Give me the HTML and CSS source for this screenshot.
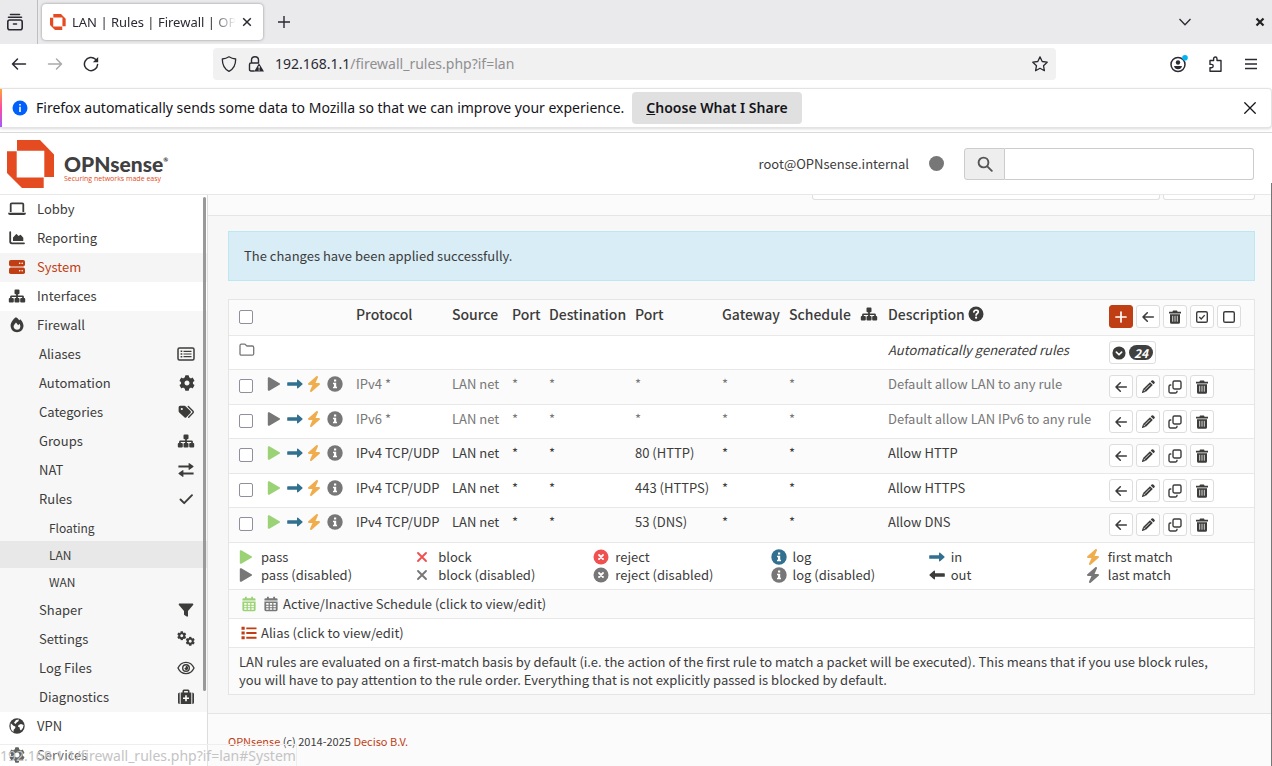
FILE: index.html
```html
<!DOCTYPE html>
<html lang="en">
<head>
<meta charset="utf-8">
<title>LAN | Rules | Firewall | OPNsense</title>
<link rel="stylesheet" href="styles.css">
</head>
<body>
<svg class="sprite" aria-hidden="true">
  <symbol id="i-play" viewBox="0 0 16 16"><path d="M.8 2.200c0-.9.8-1.300 1.500-.9l10.200 5.900c.7.400.7 1.200 0 1.600L2.300 14.700c-.7.400-1.500 0-1.500-.9z"/></symbol>
  <symbol id="i-right" viewBox="0 0 16 16"><path d="M.8 6.200H10V4.300c0-.6.7-.9 1.100-.5l4.300 3.700c.3.300.3.700 0 1l-4.300 3.700c-.4.4-1.100.1-1.100-.5V9.800H.8a.6.6 0 0 1-.6-.6V6.800c0-.3.300-.6.600-.6z"/></symbol>
  <symbol id="i-leftlong" viewBox="0 0 16 16"><path d="M15.200 6.200H6V4.300c0-.6-.7-.9-1.100-.5L.6 7.500c-.3.300-.3.700 0 1l4.300 3.700c.4.400 1.100.1 1.100-.5V9.800h9.200c.3 0 .6-.3.600-.6V6.800c0-.3-.3-.6-.6-.6z"/></symbol>
  <symbol id="i-bolt" viewBox="0 0 512 512"><path d="M349.400 44.600c5.900-13.700 1.500-29.700-10.600-38.500s-28.600-8-39.900 1.800l-256 224c-10 8.800-13.600 22.900-8.900 35.300S50.700 288 64 288H175.500L98.600 467.400c-5.900 13.700-1.500 29.700 10.600 38.500s28.600 8 39.900-1.800l256-224c10-8.800 13.600-22.900 8.900-35.300s-16.600-20.700-30-20.700H272.500L349.400 44.600z"/></symbol>
  <symbol id="i-info" viewBox="0 0 16 16"><circle cx="8" cy="8" r="7.700"/><path fill="#fff" d="M7 3.500h2.200v2H7zM6 6.700h3.200v4H10v1.500H6v-1.500h1V8.200H6z"/></symbol>
  <symbol id="i-help" viewBox="0 0 16 16"><circle cx="8" cy="8" r="7.500"/><path fill="none" stroke="#fff" stroke-width="1.700" stroke-linecap="round" d="M5.800 6c.2-1.200 1-1.800 2.200-1.800s2.300.7 2.300 1.900c0 1.400-2.200 1.500-2.200 3"/><circle cx="8.100" cy="11.700" r="1.100" fill="#fff"/></symbol>
  <symbol id="i-sitemap" viewBox="0 0 18 16"><path d="M6.500 2.500q0-1 1-1h3q1 0 1 1v2.700q0 1-1 1h-.6v1.200h4.600q1.400 0 1.400 1.400v1.200h.3q1 0 1 1v2.500q0 1-1 1h-3q-1 0-1-1V11q0-1 1-1h1V8.900H9.900V10h.6q1 0 1 1v2.500q0 1-1 1h-3q-1 0-1-1V11q0-1 1-1h.6V8.900H3.800V10h1q1 0 1 1v2.500q0 1-1 1h-3q-1 0-1-1V11q0-1 1-1h.3V8.800q0-1.400 1.400-1.400h4.600V6.200h-.6q-1 0-1-1z"/></symbol>
  <symbol id="i-gear" viewBox="0 0 512 512"><path d="M487.400 315.700l-42.600-24.600c4.300-23.200 4.300-47 0-70.200l42.600-24.600c4.900-2.800 7.100-8.600 5.500-14-11.100-35.600-30-67.800-54.700-94.600-3.800-4.100-10-5.100-14.800-2.300L380.800 110c-17.900-15.400-38.500-27.300-60.800-35.100V25.800c0-5.600-3.900-10.500-9.400-11.700-36.700-8.200-74.300-7.800-109.200 0-5.500 1.200-9.400 6.100-9.400 11.700V75c-22.200 7.900-42.800 19.800-60.800 35.100L88.700 85.500c-4.900-2.800-11-1.900-14.800 2.300-24.700 26.700-43.600 58.900-54.700 94.600-1.700 5.400.6 11.200 5.500 14L67.300 221c-4.300 23.200-4.300 47 0 70.200l-42.600 24.600c-4.900 2.800-7.100 8.600-5.500 14 11.100 35.600 30 67.800 54.700 94.600 3.800 4.100 10 5.100 14.800 2.300l42.600-24.600c17.900 15.400 38.500 27.300 60.800 35.100v49.200c0 5.600 3.900 10.500 9.400 11.700 36.700 8.200 74.300 7.800 109.200 0 5.500-1.200 9.400-6.100 9.400-11.700v-49.200c22.200-7.900 42.800-19.800 60.800-35.100l42.600 24.600c4.900 2.800 11 1.900 14.800-2.300 24.700-26.700 43.600-58.900 54.700-94.600 1.500-5.500-.7-11.300-5.600-14.100zM256 336c-44.100 0-80-35.900-80-80s35.900-80 80-80 80 35.900 80 80-35.900 80-80 80z"/></symbol>
  <symbol id="i-left" viewBox="0 0 16 16"><path fill="none" stroke="currentColor" stroke-width="1.600" stroke-linecap="round" stroke-linejoin="round" d="M13.300 8H3M7.300 3.800L3 8l4.300 4.200"/></symbol>
  <symbol id="i-pencil" viewBox="0 0 16 16"><path d="M10 3.200l2.800 2.800-6.800 6.800-3.700 1.100q-.5.100-.4-.4l1.200-3.600zM10.700 2.500l1-1q.8-.7 1.600 0l1.200 1.200q.8.800 0 1.600l-1 1z"/><path stroke="#fff" stroke-width=".8" d="M5 10.700l5-5M3.600 10.800l1.600 1.600"/></symbol>
  <symbol id="i-clone" viewBox="0 0 16 16"><g fill="none" stroke="currentColor" stroke-width="1.400"><rect x="6" y="2" width="8" height="8" rx="1.400"/><path d="M4.300 6H3.400Q2 6 2 7.400v5.200Q2 14 3.400 14h5.200q1.400 0 1.400-1.400v-.9"/></g></symbol>
  <symbol id="i-trash" viewBox="0 0 16 16"><path d="M3 5.300h10v7.900q0 1.500-1.500 1.500h-7Q3 14.700 3 13.200zM2 2.800h3.400L6 1.500h4l.6 1.300H14v1.600H2z"/><path stroke="#fff" stroke-width=".8" d="M5.700 6.800v5.900M8 6.800v5.900M10.300 6.800v5.900"/></symbol>
  <symbol id="i-checked" viewBox="0 0 16 16"><g fill="none" stroke="currentColor" stroke-width="1.400"><rect x="2.700" y="2.700" width="10.600" height="10.600" rx="1.400"/><path d="M5.300 8.100l1.900 1.900 3.500-3.900"/></g></symbol>
  <symbol id="i-square" viewBox="0 0 16 16"><rect x="2.700" y="2.700" width="10.600" height="10.600" rx="1.400" fill="none" stroke="currentColor" stroke-width="1.400"/></symbol>
  <symbol id="i-plus" viewBox="0 0 16 16"><path fill="none" stroke="currentColor" stroke-width="1.700" stroke-linecap="round" d="M8 3v10M3 8h10"/></symbol>
  <symbol id="i-x" viewBox="0 0 16 16"><path fill="none" stroke="currentColor" stroke-width="1.900" stroke-linecap="round" d="M2 4l8 8M10 4l-8 8"/></symbol>
  <symbol id="i-xcircle" viewBox="0 0 16 16"><circle cx="8" cy="8" r="7.500"/><path stroke="#fff" stroke-width="1.800" stroke-linecap="round" d="M6 6l4 4M10 6l-4 4"/></symbol>
  <symbol id="i-calendar" viewBox="0 0 16 16"><path d="M4 .8h1.800v1.400h4.400V.8H12v1.400h1.200q1.400 0 1.400 1.400v1H1.400v-1q0-1.400 1.400-1.400H4zM1.400 5.500h13.200v8.300q0 1.400-1.400 1.400H2.800q-1.400 0-1.400-1.400z"/><path fill="#fff" d="M3.200 7h2.400v1.700H3.200zM6.800 7h2.400v1.700H6.800zM10.400 7h2.400v1.700h-2.400zM3.200 9.700h2.400v1.600H3.200zM6.800 9.700h2.400v1.600H6.800zM10.400 9.700h2.400v1.600h-2.400zM3.200 12.200h2.400v1.500H3.200zM6.800 12.200h2.400v1.500H6.800zM10.400 12.200h2.400v1.500h-2.400z"/></symbol>
  <symbol id="i-list" viewBox="0 0 16 16"><path d="M.5 1.800h3.200v3H.5zM.5 6.500h3.200v3H.5zM.5 11.200h3.200v3H.5zM5.300 2.400h10.200v1.900H5.300zM5.300 7.100h10.200V9H5.300zM5.300 11.800h10.200v1.900H5.300z"/></symbol>
  <symbol id="i-folder" viewBox="0 0 16 16"><path fill="none" stroke="currentColor" stroke-width="1.300" d="M2.300 2.200h3.300q.6 0 1 .5l.7.800q.4.500 1 .5h4.900q1.500 0 1.500 1.500v6.200q0 1.500-1.500 1.500H2.500Q1 13.200 1 11.700V3.700q0-1.500 1.300-1.500z"/></symbol>
  <symbol id="i-chevcircle" viewBox="0 0 16 16"><circle cx="8" cy="8" r="7.500"/><path fill="none" stroke="#fff" stroke-width="1.900" stroke-linecap="round" stroke-linejoin="round" d="M5 7l3 3 3-3"/></symbol>
  <symbol id="i-laptop" viewBox="0 0 18 16"><path fill="none" stroke="currentColor" stroke-width="1.800" d="M2.700 11V3.300q0-1 1-1h10.600q1 0 1 1V11"/><path d="M0 11.800h18q0 2.200-2 2.200H2q-2 0-2-2.200z"/></symbol>
  <symbol id="i-chart" viewBox="0 0 16 16"><path fill="none" stroke="currentColor" stroke-width="1.800" stroke-linecap="round" d="M1.200 2.200v9.400q0 1.700 1.700 1.700h12.100"/><path d="M4 11V7.500l3-3.300q.4-.4.800 0L9.500 6l1.600-1q.4-.3.800.1L14.300 7.800V11z"/></symbol>
  <symbol id="i-server" viewBox="0 0 16 16"><rect y="1" width="16" height="6.400" rx="1.800"/><rect y="8.600" width="16" height="6.400" rx="1.800"/><g fill="#fff"><circle cx="10.700" cy="4.200" r=".8"/><circle cx="13.200" cy="4.200" r=".8"/><circle cx="10.700" cy="11.800" r=".8"/><circle cx="13.200" cy="11.800" r=".8"/></g></symbol>
  <symbol id="i-fire" viewBox="0 0 16 16"><path fill-rule="evenodd" d="M6 .8C4.200 2.500 1.600 5.600 1.600 8.800 1.600 12.600 4.500 15.200 8 15.200s6.500-2.600 6.500-6.400c0-2.500-1.800-5.300-3.200-6.600l-1 1.100C9.800 2.600 8.700 1.500 7.900.8 7.200.4 6.600.3 6 .8zM8.100 12.700c-2 0-3.500-1.200-3.500-3.100 0-1.200.9-2.300 2.400-4.200l2.200 2.800 1.300-1.500c1.600 2.300 1 6-2.400 6z"/></symbol>
  <symbol id="i-card" viewBox="0 0 18 16"><rect x="1" y="2" width="16" height="12" rx="1.500" fill="none" stroke="currentColor" stroke-width="1.500"/><path d="M3.600 4.500h1.700v1.600H3.600zM3.600 7.200h1.700v1.600H3.600zM3.600 9.900h1.700v1.600H3.600zM6.500 4.700h8v1.200h-8zM6.500 7.400h8v1.200h-8zM6.500 10.100h8v1.200h-8z"/></symbol>
  <symbol id="i-tags" viewBox="0 0 16 16"><path fill-rule="evenodd" d="M.6 3.300q0-1.500 1.500-1.500h4.300q.8 0 1.400.6l4.700 4.700q1 1 0 2L8.400 13.300q-1 1-2 0L1.200 8.500q-.6-.6-.6-1.400zM3.800 3.900a1.100 1.100 0 1 0 0 2.200 1.100 1.100 0 0 0 0-2.200z"/><path fill="none" stroke="currentColor" stroke-width="1.400" stroke-linecap="round" d="M10.300 2.400l4.500 4.700q1 1 0 2l-4.100 4.200"/></symbol>
  <symbol id="i-swap" viewBox="0 0 16 16"><path d="M.4 3.500h10.200V1.700q0-1 .8-.4l3.900 2.700q.6.500 0 1l-3.900 2.700q-.8.600-.8-.4V5.500H.4zM15.600 10.500H5.400V8.700q0-1-.8-.4L.7 11q-.6.500 0 1l3.900 2.700q.8.600.8-.4v-1.800h10.200z"/></symbol>
  <symbol id="i-check" viewBox="0 0 16 16"><path fill="none" stroke="currentColor" stroke-width="1.900" stroke-linecap="round" stroke-linejoin="round" d="M2.500 8.500l3.700 3.700 7.800-8"/></symbol>
  <symbol id="i-filter" viewBox="0 0 16 16"><path d="M1.200 1.500h13.600q1 .6.300 1.500L10 9v5q-.4 1-1.300.5L6.400 13Q6 12.700 6 12.200V9L.9 3Q.2 2.100 1.200 1.500z"/></symbol>
  <symbol id="i-eye" viewBox="0 0 18 16"><g fill="none" stroke="currentColor" stroke-width="1.400"><path d="M1 8c1.700-3.700 4.600-5.600 8-5.600S15.300 4.300 17 8c-1.700 3.700-4.600 5.600-8 5.600S2.700 11.700 1 8z"/><circle cx="9" cy="8" r="3.300"/></g><path d="M9 5.800a2.200 2.200 0 0 1 0 4.400L7 8.500q1.700.3 2-2.700z"/></symbol>
  <symbol id="i-medkit" viewBox="0 0 16 16"><path fill-rule="evenodd" d="M0 5q0-1.600 1.700-1.600V15Q0 15 0 13.500zM16 5q0-1.600-1.700-1.600V15q1.700 0 1.700-1.500zM2.700 3.400h1.800V2q0-1.500 1.400-1.500h4.200q1.400 0 1.400 1.500v1.400h1.800V15H2.700zM6.100 2v1.400h3.800V2z"/><path fill="#fff" d="M7.200 6.200h1.600v2.200H11V10H8.800v2.200H7.200V10H5V8.400h2.200z"/></symbol>
  <symbol id="i-globe" viewBox="0 0 16 16"><circle cx="8" cy="8" r="7.700"/><path fill="#fff" d="M1.800 5.200L4.500 7.700l1.800.8v1.600l-1.600 1.600-.3 2.200Q.8 11.500 1.800 5.200zM7 2l3-.4-.6 1.600L7.700 4.400 6.500 6 5 4.700zM9.500 7l2.500-.9 2.600.9q-.2 4-2.700 5.600L11 11.500l-.5-2.200L9 8.700z"/></symbol>
  <symbol id="i-search" viewBox="0 0 16 16"><g fill="none" stroke="currentColor" stroke-width="1.900" stroke-linecap="round"><circle cx="6.500" cy="6.500" r="4.900"/><path d="M10.300 10.300l4.500 4.500"/></g></symbol>
  <symbol id="i-close" viewBox="0 0 16 16"><path fill="none" stroke="currentColor" stroke-width="1.500" stroke-linecap="round" d="M2 2l12 12M14 2L2 14"/></symbol>
  <symbol id="i-mark" viewBox="0 0 48 48"><path d="M10 0h23l14 14.500V37H37.300V10.700H10z"/><path d="M0 11.200h9.700v26.200h27V48H15L0 33z"/></symbol>
</svg>

<div class="window">
  <div class="tabstrip">
    <button class="tool recent" aria-label="Recent browsing"><svg class="i18" viewBox="0 0 18 18"><g fill="none" stroke="currentColor" stroke-width="1.600" stroke-linecap="round"><path d="M4.500 1.500h9M2.500 4.300h13M7.500 11h3"/><rect x="1.800" y="7" width="14.400" height="9.800" rx="2"/></g></svg></button>
    <div class="tab"><svg class="i16 brand"><use href="#i-mark"/></svg><span class="tab-title">LAN | Rules | Firewall | OPNsense</span><button class="tool" aria-label="Close tab"><svg class="i10" viewBox="0 0 10 10"><path stroke="currentColor" stroke-width="1.500" d="M1.200 1.200l7.600 7.600M8.800 1.200L1.200 8.800"/></svg></button></div>
    <button class="tool newtab" aria-label="New tab"><svg class="i16" viewBox="0 0 16 16"><path fill="none" stroke="currentColor" stroke-width="1.400" d="M8 2v12M2 8h12"/></svg></button>
    <button class="tool listtabs" aria-label="List all tabs"><svg class="i14" viewBox="0 0 14 14"><path fill="none" stroke="currentColor" stroke-width="1.300" d="M1.500 4L7 9.700 12.500 4"/></svg></button>
    <button class="tool winclose" aria-label="Close window"><svg class="i10" viewBox="0 0 10 10"><path stroke="currentColor" stroke-width="2.200" d="M1.500 1.500l7 7M8.500 1.500l-7 7"/></svg></button>
  </div>
  <div class="toolbar">
    <button class="tool" aria-label="Back"><svg class="i16" viewBox="0 0 16 16"><path fill="none" stroke="currentColor" stroke-width="1.500" stroke-linecap="round" stroke-linejoin="round" d="M14.500 8h-13M6.500 3L1.500 8l5 5"/></svg></button>
    <button class="tool faint" aria-label="Forward"><svg class="i16" viewBox="0 0 16 16"><path fill="none" stroke="currentColor" stroke-width="1.500" stroke-linecap="round" stroke-linejoin="round" d="M1.500 8h13M9.500 3l5 5-5 5"/></svg></button>
    <button class="tool" aria-label="Reload"><svg class="i16" viewBox="0 0 16 16"><path fill="none" stroke="currentColor" stroke-width="1.500" stroke-linecap="round" d="M14.600 8.500A6.600 6.600 0 1 1 12.500 3.200"/><path d="M15.200.9v5.400H9.800z"/></svg></button>
    <div class="urlbar">
      <svg class="i16" viewBox="0 0 16 16"><path fill="none" stroke="currentColor" stroke-width="1.300" stroke-linejoin="round" d="M8 .8c2 1.300 4.300 2 6.700 2.200 0 5.600-1.900 10-6.700 12.300C3.200 13 1.300 8.600 1.300 3 3.700 2.800 6 2.100 8 .8z"/></svg>
      <svg class="i16" viewBox="0 0 16 16"><g fill="none" stroke="currentColor" stroke-width="1.400"><path d="M3.500 7V4q0-3.200 3.500-3.200T10.500 4v3M6.500 15H3q-1.500 0-1.500-1.500v-5Q1.500 7 3 7h8"/></g><path d="M11 7.300l5 8.200H6.200z"/><path stroke="#fff" stroke-width="1.200" d="M11.100 10v2.600M11.100 13.400v1.100"/></svg>
      <span class="url">192.168.1.1<span>/firewall_rules.php?if=lan</span></span>
      <svg class="i16" viewBox="0 0 16 16"><path fill="none" stroke="currentColor" stroke-width="1.300" stroke-linejoin="round" d="M8 .9l2.200 4.600 5 .7-3.700 3.500.9 5L8 12.300l-4.400 2.400.9-5L.8 6.200l5-.7z"/></svg>
    </div>
    <div class="tools">
      <button class="tool" aria-label="Account"><svg class="i18" viewBox="0 0 18 18"><circle cx="8" cy="9.500" r="7" fill="none" stroke="currentColor" stroke-width="1.500"/><circle cx="8" cy="7.500" r="2.200"/><path d="M4 11h8q-.8 3.200-4 3.200T4 11z"/><circle cx="15" cy="2.800" r="2.800" fill="#00b3f4"/></svg></button>
      <button class="tool" aria-label="Extensions"><svg class="i16" viewBox="0 0 16 16"><path fill="none" stroke="currentColor" stroke-width="1.400" stroke-linejoin="round" d="M2 4.500h3.600V2.700a1.700 1.700 0 0 1 3.400 0v1.800h4v10.800H2v-3.500h1.500a1.700 1.700 0 0 0 0-3.400H2z"/></svg></button>
      <button class="tool" aria-label="Menu"><svg class="i14" viewBox="0 0 14 14"><path stroke="currentColor" stroke-width="1.400" d="M1 2.500h12M1 7h12M1 11.500h12"/></svg></button>
    </div>
  </div>
  <div class="notice">
    <svg class="i16" viewBox="0 0 16 16"><circle cx="8" cy="8" r="7.500" fill="#0060fe"/><path fill="#fff" d="M7.200 4h1.600v1.500H7.200zM7.200 6.700h1.600V12H7.200z"/></svg>
    <span>Firefox automatically sends some data to Mozilla so that we can improve your experience.</span>
    <button class="choose"><u>C</u>hoose What I Share</button>
    <button class="tool dismiss" aria-label="Close"><svg class="i14"><use href="#i-close"/></svg></button>
  </div>

  <div class="page">
    <header class="topbar">
      <a class="logo" href="#">
        <svg class="logo-mark brand"><use href="#i-mark"/></svg>
        <span class="logo-text"><b>OPNsense<sup>®</sup></b><small>Securing networks made easy</small></span>
      </a>
      <span class="user">root@OPNsense.internal</span>
      <span class="status-dot"></span>
      <form class="search"><label for="q" aria-label="Search"><svg class="i16"><use href="#i-search"/></svg></label><input id="q" type="text"></form>
    </header>
    <div class="columns">
      <nav class="sidebar">
        <a href="#"><svg class="ico"><use href="#i-laptop"/></svg>Lobby</a>
        <a href="#"><svg class="ico"><use href="#i-chart"/></svg>Reporting</a>
        <a href="#" class="hover"><svg class="ico"><use href="#i-server"/></svg>System</a>
        <a href="#"><svg class="ico"><use href="#i-sitemap"/></svg>Interfaces</a>
        <div class="open">
          <a href="#"><svg class="ico"><use href="#i-fire"/></svg>Firewall</a>
          <a href="#" class="sub">Aliases<svg class="ico"><use href="#i-card"/></svg></a>
          <a href="#" class="sub">Automation<svg class="i16"><use href="#i-gear"/></svg></a>
          <a href="#" class="sub">Categories<svg class="ico"><use href="#i-tags"/></svg></a>
          <a href="#" class="sub">Groups<svg class="ico"><use href="#i-sitemap"/></svg></a>
          <a href="#" class="sub">NAT<svg class="ico"><use href="#i-swap"/></svg></a>
          <a href="#" class="sub">Rules<svg class="ico"><use href="#i-check"/></svg></a>
          <div class="leafs">
            <a href="#">Floating</a>
            <a href="#" class="current">LAN</a>
            <a href="#">WAN</a>
          </div>
          <a href="#" class="sub">Shaper<svg class="ico"><use href="#i-filter"/></svg></a>
          <a href="#" class="sub">Settings<svg class="ico" viewBox="0 0 18 16"><use href="#i-gear" x="0" y="0" width="9.500" height="9.500"/><use href="#i-gear" x="8.500" y="5.500" width="9.500" height="9.500"/></svg></a>
          <a href="#" class="sub">Log Files<svg class="ico"><use href="#i-eye"/></svg></a>
          <a href="#" class="sub">Diagnostics<svg class="ico"><use href="#i-medkit"/></svg></a>
        </div>
        <a href="#"><svg class="ico"><use href="#i-globe"/></svg>VPN</a>
        <a href="#"><svg class="ico"><use href="#i-gear"/></svg>Services</a>
        <span class="nav-scroll"></span>
      </nav>

      <main>
        <div class="pagehead"><span class="head-select"></span><span class="head-button"></span></div>
        <div class="content">
          <div class="alert" role="alert">The changes have been applied successfully.</div>
          <table class="rules">
            <colgroup><col class="c-check"><col class="c-icons"><col class="c-proto"><col class="c-source"><col class="c-sport"><col class="c-dest"><col class="c-dport"><col class="c-gate"><col class="c-sched"><col class="c-site"><col class="c-desc"><col class="c-act"></colgroup>
            <thead>
              <tr><th><input type="checkbox" aria-label="Select all"></th><th></th><th>Protocol</th><th>Source</th><th>Port</th><th>Destination</th><th>Port</th><th>Gateway</th><th>Schedule</th><th><svg class="ico"><use href="#i-sitemap"/></svg></th><th>Description <svg class="i16"><use href="#i-help"/></svg></th>
              <th><div class="actions"><button class="btn primary" aria-label="Add"><svg class="i16"><use href="#i-plus"/></svg></button><button class="btn" aria-label="Move"><svg class="i16"><use href="#i-left"/></svg></button><button class="btn" aria-label="Delete"><svg class="i16"><use href="#i-trash"/></svg></button><button class="btn" aria-label="Enable"><svg class="i16"><use href="#i-checked"/></svg></button><button class="btn" aria-label="Disable"><svg class="i16"><use href="#i-square"/></svg></button></div></th></tr>
            </thead>
            <tbody>
              <tr><td><div class="icons grey"><svg class="i16"><use href="#i-folder"/></svg></div></td><td></td><td></td><td></td><td></td><td></td><td></td><td></td><td></td><td></td><td><i>Automatically generated rules</i></td>
              <td><button class="btn wide"><svg class="i14"><use href="#i-chevcircle"/></svg><span class="badge">24</span></button></td></tr>

              <tr class="off"><td><input type="checkbox" aria-label="Select rule 1"></td><td><div class="icons"><svg class="i16 grey"><use href="#i-play"/></svg><svg class="i16 blue"><use href="#i-right"/></svg><svg class="i16 amber"><use href="#i-bolt"/></svg><svg class="i16 grey"><use href="#i-info"/></svg></div></td><td>IPv4 *</td><td>LAN net</td><td>*</td><td>*</td><td>*</td><td>*</td><td>*</td><td></td><td>Default allow LAN to any rule</td>
              <td><div class="actions"><button class="btn" aria-label="Move"><svg class="i16"><use href="#i-left"/></svg></button><button class="btn" aria-label="Edit"><svg class="i16"><use href="#i-pencil"/></svg></button><button class="btn" aria-label="Clone"><svg class="i16"><use href="#i-clone"/></svg></button><button class="btn" aria-label="Delete"><svg class="i16"><use href="#i-trash"/></svg></button></div></td></tr>

              <tr class="off"><td><input type="checkbox" aria-label="Select rule 2"></td><td><div class="icons"><svg class="i16 grey"><use href="#i-play"/></svg><svg class="i16 blue"><use href="#i-right"/></svg><svg class="i16 amber"><use href="#i-bolt"/></svg><svg class="i16 grey"><use href="#i-info"/></svg></div></td><td>IPv6 *</td><td>LAN net</td><td>*</td><td>*</td><td>*</td><td>*</td><td>*</td><td></td><td>Default allow LAN IPv6 to any rule</td>
              <td><div class="actions"><button class="btn" aria-label="Move"><svg class="i16"><use href="#i-left"/></svg></button><button class="btn" aria-label="Edit"><svg class="i16"><use href="#i-pencil"/></svg></button><button class="btn" aria-label="Clone"><svg class="i16"><use href="#i-clone"/></svg></button><button class="btn" aria-label="Delete"><svg class="i16"><use href="#i-trash"/></svg></button></div></td></tr>

              <tr><td><input type="checkbox" aria-label="Select rule 3"></td><td><div class="icons"><svg class="i16 green"><use href="#i-play"/></svg><svg class="i16 blue"><use href="#i-right"/></svg><svg class="i16 amber"><use href="#i-bolt"/></svg><svg class="i16 grey"><use href="#i-info"/></svg></div></td><td>IPv4 TCP/UDP</td><td>LAN net</td><td>*</td><td>*</td><td>80 (HTTP)</td><td>*</td><td>*</td><td></td><td>Allow HTTP</td>
              <td><div class="actions"><button class="btn" aria-label="Move"><svg class="i16"><use href="#i-left"/></svg></button><button class="btn" aria-label="Edit"><svg class="i16"><use href="#i-pencil"/></svg></button><button class="btn" aria-label="Clone"><svg class="i16"><use href="#i-clone"/></svg></button><button class="btn" aria-label="Delete"><svg class="i16"><use href="#i-trash"/></svg></button></div></td></tr>

              <tr><td><input type="checkbox" aria-label="Select rule 4"></td><td><div class="icons"><svg class="i16 green"><use href="#i-play"/></svg><svg class="i16 blue"><use href="#i-right"/></svg><svg class="i16 amber"><use href="#i-bolt"/></svg><svg class="i16 grey"><use href="#i-info"/></svg></div></td><td>IPv4 TCP/UDP</td><td>LAN net</td><td>*</td><td>*</td><td>443 (HTTPS)</td><td>*</td><td>*</td><td></td><td>Allow HTTPS</td>
              <td><div class="actions"><button class="btn" aria-label="Move"><svg class="i16"><use href="#i-left"/></svg></button><button class="btn" aria-label="Edit"><svg class="i16"><use href="#i-pencil"/></svg></button><button class="btn" aria-label="Clone"><svg class="i16"><use href="#i-clone"/></svg></button><button class="btn" aria-label="Delete"><svg class="i16"><use href="#i-trash"/></svg></button></div></td></tr>

              <tr><td><input type="checkbox" aria-label="Select rule 5"></td><td><div class="icons"><svg class="i16 green"><use href="#i-play"/></svg><svg class="i16 blue"><use href="#i-right"/></svg><svg class="i16 amber"><use href="#i-bolt"/></svg><svg class="i16 grey"><use href="#i-info"/></svg></div></td><td>IPv4 TCP/UDP</td><td>LAN net</td><td>*</td><td>*</td><td>53 (DNS)</td><td>*</td><td>*</td><td></td><td>Allow DNS</td>
              <td><div class="actions"><button class="btn" aria-label="Move"><svg class="i16"><use href="#i-left"/></svg></button><button class="btn" aria-label="Edit"><svg class="i16"><use href="#i-pencil"/></svg></button><button class="btn" aria-label="Clone"><svg class="i16"><use href="#i-clone"/></svg></button><button class="btn" aria-label="Delete"><svg class="i16"><use href="#i-trash"/></svg></button></div></td></tr>
            </tbody>
            <tfoot>
              <tr><td colspan="12"><div class="legend">
                <span><svg class="i16 green"><use href="#i-play"/></svg>pass</span><span><svg class="i16 red"><use href="#i-x"/></svg>block</span><span><svg class="i16 red"><use href="#i-xcircle"/></svg>reject</span><span><svg class="i16 blue"><use href="#i-info"/></svg>log</span><span><svg class="i16 blue"><use href="#i-right"/></svg>in</span><span><svg class="i16 amber"><use href="#i-bolt"/></svg>first match</span>
                <span><svg class="i16 grey"><use href="#i-play"/></svg>pass (disabled)</span><span><svg class="i16 grey"><use href="#i-x"/></svg>block (disabled)</span><span><svg class="i16 grey"><use href="#i-xcircle"/></svg>reject (disabled)</span><span><svg class="i16 grey"><use href="#i-info"/></svg>log (disabled)</span><span><svg class="i16"><use href="#i-leftlong"/></svg>out</span><span><svg class="i16 grey"><use href="#i-bolt"/></svg>last match</span>
              </div></td></tr>
              <tr><td colspan="12"><div class="note"><svg class="i16 green"><use href="#i-calendar"/></svg><svg class="i16 grey cal"><use href="#i-calendar"/></svg>Active/Inactive Schedule (click to view/edit)</div></td></tr>
              <tr><td colspan="12"><div class="note"><svg class="i16 rust"><use href="#i-list"/></svg>Alias (click to view/edit)</div></td></tr>
              <tr><td colspan="12" class="about">LAN rules are evaluated on a first-match basis by default (i.e. the action of the first rule to match a packet will be executed). This means that if you use block rules, you will have to pay attention to the rule order. Everything that is not explicitly passed is blocked by default.</td></tr>
            </tfoot>
          </table>
        </div>
        <footer><a href="#">OPNsense</a> (c) 2014-2025 <a href="#">Deciso B.V.</a></footer>
      </main>
    </div>
    <div class="linkstatus">192.168.1.1/firewall_rules.php?if=lan#System</div>
    <span class="page-scroll"></span>
  </div>
</div>
</body>
</html>
```
FILE: styles.css
```css
* { box-sizing: border-box; }
body { margin: 0; overflow: hidden; color: #3c3c3b; font: 13px/18px "Noto Sans CJK JP", sans-serif; }
a { color: inherit; text-decoration: none; }
button { font: inherit; color: inherit; }
svg { display: block; fill: currentColor; flex: none; }
.sprite { display: none; }
.i10 { width: 10px; height: 10px; }
.i14 { width: 14px; height: 14px; }
.i16 { width: 16px; height: 16px; }
.i18 { width: 18px; height: 18px; }
.ico { width: 18px; height: 16px; }
.brand { color: #e44b20; }
.grey { color: #777; }
.blue { color: #31708f; }
.green { color: #9bd275; }
.amber { color: #f0ad4e; }
.red { color: #f05050; }
.rust { color: #c03e14; }

.window { display: flex; flex-direction: column; height: 100vh; }
.tool { display: flex; padding: 0; border: 0; background: none; }

/* browser chrome */
.tabstrip, .toolbar, .notice { display: flex; flex: none; align-items: center; color: #2b2a33; font-family: "Noto Sans", sans-serif; font-size: 14px; line-height: 20px; }
.tabstrip { height: 44px; padding-right: 7px; background: #eaeaec; }
.recent { align-items: center; height: 44px; padding: 0 13px 0 6px; border-right: 1px solid #bdbdc2; }
.tab { display: flex; align-items: center; width: 221px; height: 36px; margin-left: 4px; padding: 0 11px 0 8px; gap: 6px; border-radius: 4px; background: #fff; box-shadow: 0 0 3px rgba(0, 0, 0, .4); }
.tab-title { flex: 1; overflow: hidden; font-size: 13px; white-space: nowrap; -webkit-mask-image: linear-gradient(to right, #000 85%, transparent); mask-image: linear-gradient(to right, #000 85%, transparent); }
.newtab { margin-left: 13px; }
.listtabs { margin-left: auto; }
.winclose { margin-left: 63px; color: #222; }
.toolbar { height: 44px; padding: 0 14px 4px 11px; gap: 20px; background: #fff; }
.faint { color: #aaa; }
.urlbar { display: flex; flex: 1; align-items: center; height: 32px; margin: 0 102px 0 94px; padding: 0 8px; gap: 11px; border-radius: 4px; background: #f1f1f1; }
.url { flex: 1; }
.url span { color: #8f8f91; }
.tools { display: flex; align-items: center; gap: 20px; margin-left: -8px; }
.notice { height: 40px; margin-bottom: 4px; padding: 0 14px 0 12px; gap: 8px; border: 1px solid #e3e3e3; border-left: 0; border-radius: 0 4px 4px 0; background: linear-gradient(#ffa436, #ff4aa2, #a259ff) left / 2px 100% no-repeat, #fff; box-shadow: 0 1px 3px rgba(0, 0, 0, .15); color: #15141a; }
.choose { height: 32px; padding: 0 14px; border: 0; border-radius: 4px; background: #e0e0e0; font-weight: 600; }
.dismiss { margin-left: auto; }

/* application header */
.page { position: relative; display: flex; flex: 1; flex-direction: column; min-height: 0; border-top: 1px solid #d9d9d9; background: #fff; }
.topbar { display: flex; flex: none; align-items: center; height: 62px; padding: 0 18px 0 7px; gap: 20px; border-bottom: 1px solid #e8e8e8; }
.logo { display: flex; gap: 9px; align-items: center; margin-right: auto; }
.logo-mark { width: 48px; height: 48px; }
.logo-text { display: flex; flex-direction: column; padding-top: 10px; }
.logo-text b { color: #404041; font: 900 21px/20px "Lato", sans-serif; }
.logo-text sup { font-size: 6px; line-height: 6px; vertical-align: 10px; }
.logo-text small { color: #e44b20; font: 7px/10px "Open Sans", sans-serif; }
.status-dot { width: 15px; height: 15px; border-radius: 50%; background: #777; }
.search { display: flex; width: 290px; height: 32px; }
.search label { display: flex; align-items: center; justify-content: center; width: 41px; border: 1px solid #ccc; border-radius: 3px 0 0 3px; background: #eee; color: #555; }
.search input { flex: 1; min-width: 0; border: 1px solid #ccc; border-left: 0; border-radius: 0 3px 3px 0; background: #fff; }

.columns { display: flex; flex: 1; min-height: 0; }

/* navigation */
.sidebar { position: relative; flex: none; width: 208px; overflow: hidden; border-right: 1px solid #ddd; background: #fff; }
.sidebar a { display: flex; align-items: center; height: 29px; padding: 0 12px 1px 8px; gap: 11px; }
.sidebar .hover { background: #f5f5f5; color: #c03e14; }
.open { background: #f7f7f7; }
.sidebar .sub { justify-content: space-between; padding-left: 39px; }
.leafs { padding-bottom: 1px; font-size: 12px; }
.sidebar .leafs a { height: 27px; padding: 0 0 0 49px; }
.sidebar .current { background: #e8e8e8; }
.nav-scroll { position: absolute; top: 2px; right: 1px; width: 3px; height: 494px; border-radius: 2px; background: #999; }

main { flex: 1; min-width: 0; overflow: hidden; background: #f7f7f7; }
.pagehead { display: flex; justify-content: flex-end; height: 21px; padding-right: 17px; gap: 3px; border-bottom: 1px solid #e5e5e5; background: #fbfbfb; }
.head-select, .head-button { height: 5px; border: 1px solid #e0e0e0; border-top: 0; border-radius: 0 0 3px 3px; background: #fff; }
.head-select { width: 348px; }
.head-button { width: 92px; }
.content { padding: 15px 17px 18px 20px; }
.alert { margin-bottom: 18px; padding: 15px; border: 1px solid #bce8f1; background: #d9edf7; }

/* rule table */
.rules { width: 100%; table-layout: fixed; border: 1px solid #e5e5e5; border-spacing: 0; background: #fff; }
.c-check { width: 33px; }
.c-icons { width: 89px; }
.c-proto { width: 96px; }
.c-source { width: 60px; }
.c-sport { width: 37px; }
.c-dest { width: 86px; }
.c-dport { width: 87px; }
.c-gate { width: 67px; }
.c-sched { width: 71px; }
.c-site { width: 28px; }
.c-desc { width: 221px; }
.c-act { width: 150px; }
.rules th, .rules td { padding: 5px 0 5px 5px; border-bottom: 1px solid #e8e8e8; text-align: left; vertical-align: top; white-space: nowrap; }
.rules th { padding-bottom: 7px; font-size: 14px; font-weight: 500; }
.rules th:first-child, .rules td:first-child { padding-left: 10px; }
.rules tr:last-child td[colspan] { border-bottom: 0; }
.rules td[colspan] { padding-right: 10px; white-space: normal; }
.rules td.about { padding-right: 32px; }
.rules tbody tr:nth-child(even) td { padding-bottom: 6px; }
thead tr, tbody tr:nth-child(even), tfoot tr:nth-child(even), tfoot tr:last-child { background: #fbfbfb; }
.rules .off { color: #777; }
.rules th svg { display: inline-block; vertical-align: -2px; }
.rules .btn svg { display: block; }
.rules input { appearance: none; display: block; width: 14px; height: 14px; margin: 4px 0 0; border: 1px solid #8f8f9d; border-radius: 2px; background: #fff; }
.rules th input { margin-top: 5px; }
.icons { display: flex; align-items: center; height: 18px; gap: 4px; }
.actions { display: flex; gap: 3px; }
.btn { display: flex; align-items: center; justify-content: center; width: 24px; height: 23px; padding: 0; border: 1px solid #ddd; border-radius: 3px; background: #fff; color: #3c3c3b; }
.primary { border-color: #c03e14; background: #c03e14; color: #fff; }
.wide { width: 47px; gap: 3px; }
.badge { padding: 0 5px; border-radius: 8px; background: #404040; color: #fff; font: italic 600 12px/15px "Noto Sans CJK JP", sans-serif; }
.legend { display: grid; grid-template-columns: 177fr 177fr 177fr 158fr 157fr 158fr; }
.legend span { display: flex; align-items: center; gap: 6px; }
.note { display: flex; align-items: center; gap: 4px; padding-left: 2px; }
.cal { margin-left: 2px; }

footer { height: 60px; padding: 18px 20px; border-top: 1px solid #e5e5e5; background: #fbfbfb; font-size: 11px; }
footer a { color: #c03e14; }

.linkstatus { position: absolute; bottom: 0; left: 0; height: 22px; padding: 2px 0 0; border-top: 1px solid #eee; border-right: 1px solid #eee; background: rgba(255, 255, 255, .2); color: #c4c4c4; font-family: "Noto Sans", sans-serif; font-size: 14px; }
.page-scroll { position: absolute; top: 50px; right: 0; bottom: 0; width: 1px; background: #777; }
```
